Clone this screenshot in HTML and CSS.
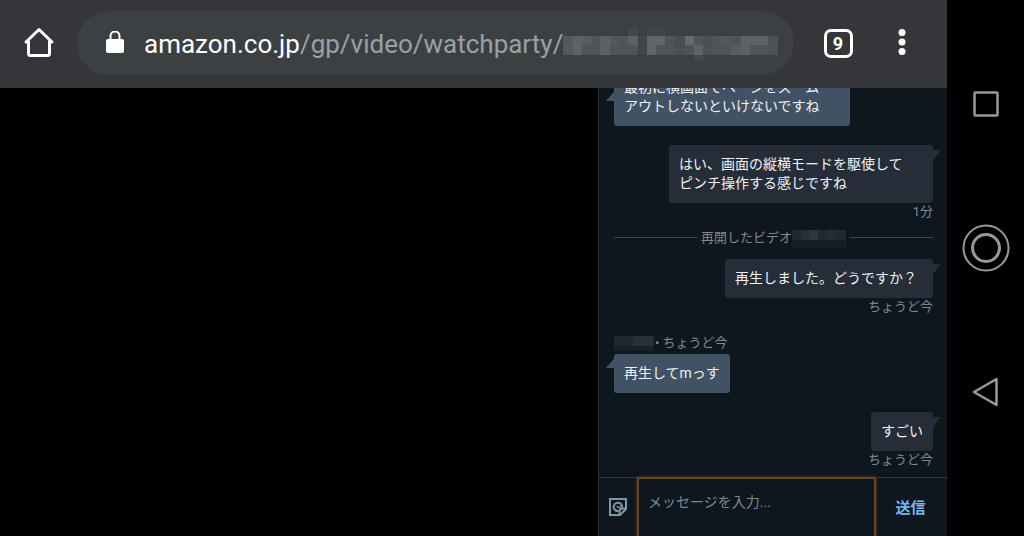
FILE: index.html
```html
<!DOCTYPE html>
<html lang="ja">
<head>
    <meta charset="UTF-8">
    <meta name="viewport" content="width=device-width, initial-scale=1.0">
    <title>Watch Party</title>
    <link rel="stylesheet" href="styles.css">
</head>
<body>
    <div class="browser">
        <header class="toolbar">
            <button class="icon-button" aria-label="Home">
                <svg width="32" height="32" viewBox="0 0 32 32" fill="none" stroke="#fff" stroke-width="3" stroke-linejoin="round" stroke-linecap="round">
                    <path d="M3 15L16 2.500L29 15M5.500 14V26.500Q5.500 28.500 7.500 28.500H24.500Q26.500 28.500 26.500 26.500V14"/>
                </svg>
            </button>
            <div class="address">
                <svg class="lock" width="18" height="24" viewBox="0 0 18 24">
                    <rect x="0" y="8" width="18" height="14" rx="2" fill="#fff"/>
                    <path d="M4.500 9V5A4.500 4.500 0 0 1 13.500 5V9" fill="none" stroke="#fff" stroke-width="2"/>
                </svg>
                <span class="url"><span class="host">amazon.co.jp</span>/gp/video/watchparty/</span>
                <svg class="hidden-id" width="215" height="36" viewBox="0 0 221 36" preserveAspectRatio="none" shape-rendering="crispEdges">
                    <rect x="0" y="10" width="221" height="19" fill="#505457"/>
                    <rect x="0" y="10" width="10" height="19" fill="#56595c"/>
                    <rect x="10" y="10" width="10" height="19" fill="#606366"/>
                    <rect x="20" y="10" width="9" height="9" fill="#5a5d60"/>
                    <rect x="38" y="10" width="10" height="19" fill="#5e6164"/>
                    <rect x="48" y="10" width="10" height="9" fill="#56595c"/>
                    <rect x="67" y="1" width="10" height="9" fill="#44484b"/>
                    <rect x="67" y="10" width="10" height="9" fill="#5e6164"/>
                    <rect x="77" y="10" width="9" height="19" fill="#414548"/>
                    <rect x="86" y="1" width="20" height="9" fill="#414548"/>
                    <rect x="86" y="10" width="10" height="19" fill="#626568"/>
                    <rect x="96" y="10" width="9" height="9" fill="#626568"/>
                    <rect x="115" y="10" width="10" height="19" fill="#4a4e51"/>
                    <rect x="125" y="10" width="10" height="9" fill="#67696c"/>
                    <rect x="135" y="19" width="9" height="10" fill="#606366"/>
                    <rect x="135" y="29" width="9" height="6" fill="#46494c"/>
                    <rect x="144" y="10" width="10" height="19" fill="#4c5053"/>
                    <rect x="163" y="10" width="10" height="9" fill="#55585b"/>
                    <rect x="173" y="19" width="10" height="10" fill="#5a5d60"/>
                    <rect x="183" y="10" width="28" height="9" fill="#606366"/>
                    <rect x="183" y="19" width="9" height="10" fill="#5e6164"/>
                    <rect x="211" y="10" width="10" height="19" fill="#4e5255"/>
                </svg>
            </div>
            <button class="icon-button tabs" aria-label="Tabs"><span class="tab-count">9</span></button>
            <button class="icon-button" aria-label="Menu">
                <svg width="8" height="28" viewBox="0 0 8 28" fill="#fff">
                    <circle cx="4" cy="3.500" r="3.500"/>
                    <circle cx="4" cy="13" r="3.500"/>
                    <circle cx="4" cy="22.500" r="3.500"/>
                </svg>
            </button>
        </header>

        <main class="page">
            <section class="video"></section>
            <section class="chat">
                <div class="messages">
                    <div class="message received">
                        <p class="bubble first">最初に横画面でページをズーム<br>アウトしないといけないですね</p>
                    </div>
                    <div class="message sent">
                        <p class="bubble long">はい、画面の縦横モードを駆使して<br>ピンチ操作する感じですね</p>
                        <span class="meta">1分</span>
                    </div>
                    <div class="event">
                        <span>再開したビデオ</span>
                        <svg width="54" height="20" viewBox="0 0 54 20" shape-rendering="crispEdges">
                            <rect x="0" y="2" width="54" height="10" fill="#202931"/>
                            <rect x="9" y="2" width="9" height="10" fill="#283139"/>
                            <rect x="18" y="2" width="8" height="10" fill="#2e373f"/>
                            <rect x="35" y="2" width="9" height="10" fill="#252e36"/>
                            <rect x="0" y="12" width="54" height="8" fill="#151e25"/>
                        </svg>
                    </div>
                    <div class="message sent">
                        <p class="bubble medium">再生しました。どうですか？</p>
                        <span class="meta">ちょうど今</span>
                    </div>
                    <div class="message received">
                        <span class="meta sender">
                            <svg width="40" height="16" viewBox="0 0 40 16" shape-rendering="crispEdges">
                                <rect x="0" y="1" width="40" height="10" fill="#1f272e"/>
                                <rect x="19" y="1" width="20" height="10" fill="#293138"/>
                                <rect x="0" y="11" width="40" height="5" fill="#182027"/>
                            </svg>
                            • ちょうど今
                        </span>
                        <p class="bubble">再生してmっす</p>
                    </div>
                    <div class="message sent">
                        <p class="bubble">すごい</p>
                        <span class="meta">ちょうど今</span>
                    </div>
                </div>
                <form class="composer">
                    <button type="button" class="sticker" aria-label="スタンプ">
                        <svg width="18" height="18" viewBox="0 0 18 18" fill="none" stroke="#8197a4" stroke-width="2">
                            <path d="M1 1H17V11L11 17H1Z"/>
                            <path d="M10.500 17V13.500Q10.500 10.500 13.500 10.500H17"/>
                            <path d="M9.500 13A4.200 4.200 0 1 1 13 9.500"/>
                            <path d="M8 8Q9 10.500 12 8.500" stroke-width="1.500"/>
                        </svg>
                    </button>
                    <textarea aria-label="メッセージ" placeholder="メッセージを入力..."></textarea>
                    <button type="button" class="send">送信</button>
                </form>
            </section>
        </main>
    </div>

    <nav class="system-nav">
        <button aria-label="Recent apps">
            <svg width="28" height="28" viewBox="0 0 28 28" fill="none" stroke="#999" stroke-width="2.500">
                <rect x="2.500" y="2.500" width="23" height="23" rx="1"/>
            </svg>
        </button>
        <button aria-label="Home">
            <svg width="48" height="48" viewBox="0 0 48 48" fill="none" stroke="#999">
                <circle cx="24" cy="24" r="22.500" stroke-width="2"/>
                <circle cx="24" cy="24" r="13.500" stroke-width="3"/>
            </svg>
        </button>
        <button aria-label="Back">
            <svg width="28" height="30" viewBox="0 0 28 30" fill="none" stroke="#999" stroke-width="2.500" stroke-linejoin="round">
                <path d="M2 15L24.500 2V28Z"/>
            </svg>
        </button>
    </nav>
</body>
</html>
```
FILE: styles.css
```css
:root {
    --toolbar: #35363a;
    --address: #3c4043;
    --chat: #0f171e;
    --received: #425265;
    --sent: #252d38;
    --line: #2f3c46;
    --muted: #7c8a95;
    --text: #f0f3f5;
}
* {
    box-sizing: border-box;
}
body {
    margin: 0;
    height: 100vh;
    display: flex;
    overflow: hidden;
    background-color: #000;
    color: var(--text);
    font-family: Roboto, "Noto Sans CJK JP", sans-serif;
    font-size: 14px;
    line-height: 19px;
}
button {
    padding: 0;
    border: none;
    background: none;
    color: inherit;
    font-family: inherit;
    cursor: pointer;
}
svg {
    display: block;
    flex-shrink: 0;
}
.browser {
    flex: 1;
    min-width: 0;
    display: flex;
    flex-direction: column;
}

/* Browser toolbar */
.toolbar {
    display: flex;
    align-items: center;
    height: 88px;
    padding: 0 13px 2px 0;
    background-color: var(--toolbar);
}
.icon-button {
    display: flex;
    align-items: center;
    justify-content: center;
    width: 64px;
    height: 64px;
}
.toolbar > .icon-button:first-child {
    width: 77px;
}
.address {
    flex: 1;
    min-width: 0;
    display: flex;
    align-items: center;
    height: 64px;
    margin-right: 12px;
    padding: 0 16px 0 29px;
    border-radius: 32px;
    background-color: var(--address);
    overflow: hidden;
}
.url {
    margin-left: 20px;
    padding-top: 2px;
    color: #9aa0a6;
    font-size: 26px;
    line-height: 32px;
    white-space: nowrap;
}
.host {
    color: #fff;
}
.hidden-id {
    margin-top: 2px;
}
.tab-count {
    display: flex;
    align-items: center;
    justify-content: center;
    width: 29px;
    height: 29px;
    border: 3px solid #fff;
    border-radius: 7px;
    color: #fff;
    font-size: 18px;
    font-weight: bold;
}

/* Video and chat */
.page {
    flex: 1;
    min-height: 0;
    display: flex;
}
.video {
    flex: 1;
}
.chat {
    width: 349px;
    display: flex;
    flex-direction: column;
    border-left: 1px solid #25313b;
    background-color: var(--chat);
}
.messages {
    flex: 1;
    min-height: 0;
    display: flex;
    flex-direction: column;
    justify-content: flex-end;
    padding: 0 14px 9px 15px;
    overflow: hidden;
}
.message {
    display: flex;
    flex-direction: column;
    align-items: flex-start;
    margin-top: 19px;
}
.sent {
    align-items: flex-end;
}
.bubble {
    position: relative;
    margin: 0;
    padding: 10px;
    border-radius: 3px;
    background-color: var(--sent);
}
.received .bubble {
    background-color: var(--received);
}
.bubble::after {
    content: "";
    position: absolute;
    top: 5px;
    left: 100%;
    width: 8px;
    height: 10px;
    background-color: var(--sent);
    clip-path: polygon(0 0, 100% 0, 0 100%);
}
.received .bubble::after {
    top: 0;
    left: -8px;
    width: 12px;
    height: 14px;
    background-color: var(--received);
    clip-path: polygon(100% 0, 100% 100%, 0 100%);
}
.received .first::after {
    top: 19px;
}
.first {
    width: 236px;
}
.medium {
    width: 208px;
}
.long {
    width: 264px;
}
.meta,
.event {
    color: var(--muted);
    font-size: 13px;
    line-height: 17px;
}
.sender {
    display: flex;
    align-items: center;
    gap: 1px;
    margin-bottom: 3px;
}
.event {
    display: flex;
    align-items: center;
    height: 19px;
    margin-top: 8px;
}
.event::before,
.event::after {
    content: "";
    flex: 1;
    height: 1px;
    background-color: #3b4953;
}
.event::before {
    margin-right: 4px;
}
.event::after {
    margin-left: 4px;
}
.event + .message {
    margin-top: 12px;
}

/* Message form */
.composer {
    display: flex;
    height: 59px;
    border-top: 1px solid var(--line);
}
.sticker {
    width: 38px;
    display: flex;
    align-items: center;
    justify-content: center;
}
textarea {
    flex: 1;
    min-width: 0;
    height: 72px;
    margin: -1px 0 0;
    padding: 14px 9px;
    border: 2px solid #6b4420;
    border-radius: 2px;
    outline: none;
    box-shadow: 0 0 3px #6b4420;
    background-color: var(--chat);
    color: var(--text);
    font: inherit;
    resize: none;
}
textarea::placeholder {
    color: var(--muted);
}
.send {
    width: 71px;
    padding: 0 2px 2px 0;
    color: #79b8f3;
    font-size: 15px;
    font-weight: bold;
}

/* Android navigation buttons */
.system-nav {
    width: 77px;
    display: flex;
    flex-direction: column;
    align-items: center;
    justify-content: space-between;
    padding: 80px 0 120px;
    background-color: #000;
}
.system-nav button {
    display: flex;
    align-items: center;
    justify-content: center;
    width: 48px;
    height: 48px;
}
```
